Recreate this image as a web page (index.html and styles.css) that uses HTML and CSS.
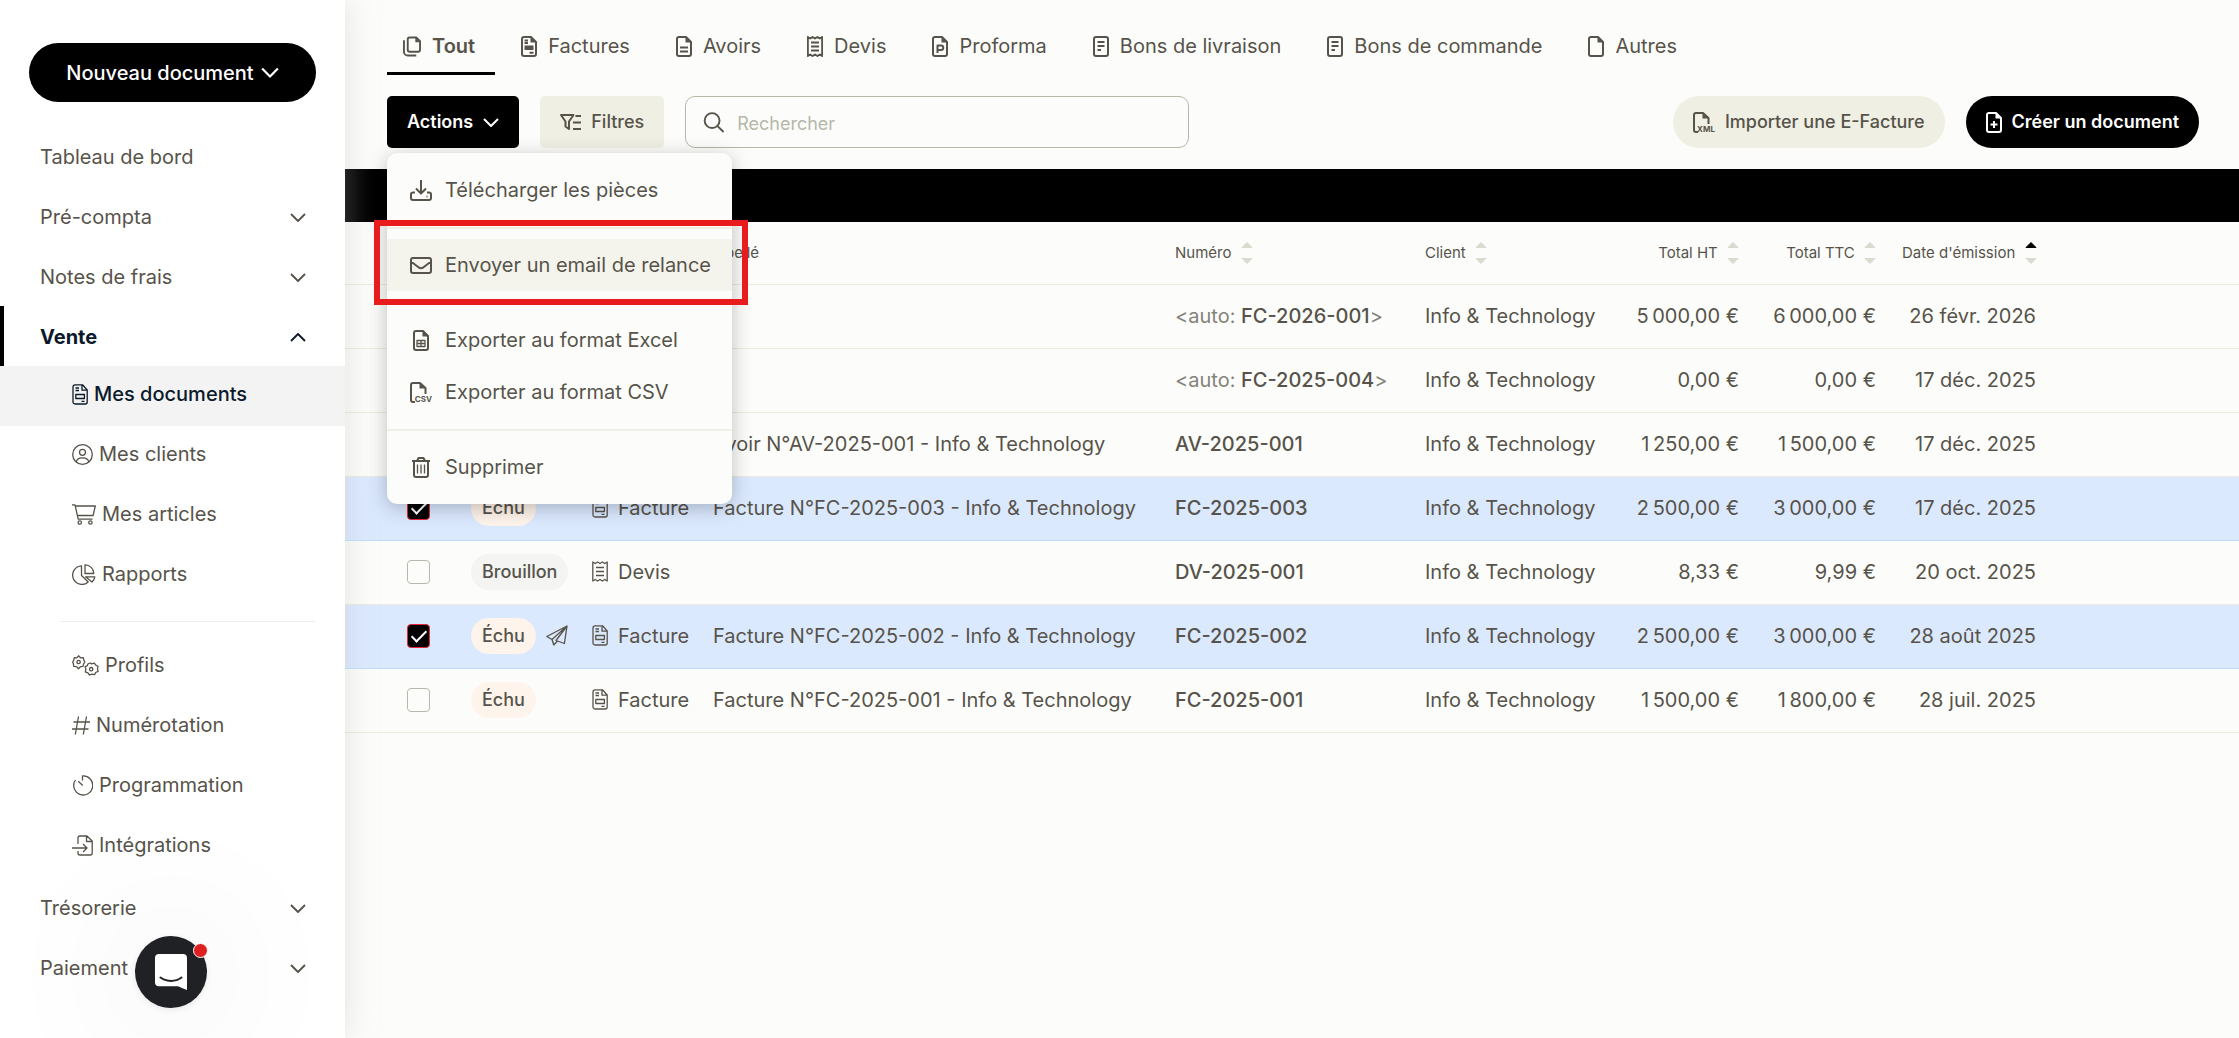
FILE: index.html
```html
<!DOCTYPE html>
<html lang="fr">
<head>
  <meta charset="UTF-8">
  <meta name="viewport" content="width=device-width, initial-scale=1.0">
  <title>Mes documents</title>
  <link rel="stylesheet" href="styles.css">
</head>
<body>
  <!-- Icon sprite -->
  <svg class="sprite" aria-hidden="true">
    <symbol id="i-chevron" viewBox="0 0 16 10"><path d="M1 1.5l7 7 7-7"/></symbol>
    <symbol id="i-invoice" viewBox="0 0 16 21"><path d="M3 .8h7.5L15.2 6v12a2 2 0 0 1-2 2H3a2 2 0 0 1-2-2V3A2 2 0 0 1 3 .8zM10 1v5.2h5M3.5 4h3.5M3.5 6.5h3.5M3.8 10.5h8.6v4H3.8zM9.500 17.3h3"/></symbol>
    <symbol id="i-invoice-bold" viewBox="0 0 16 21"><path d="M3 1h7l5 5v12a2 2 0 0 1-2 2H3a2 2 0 0 1-2-2V3a2 2 0 0 1 2-2zM3.5 4.500h3.5M3.5 7h3.5M8.500 16.7h4"/><path class="fill" d="M9.500 1v5.500H15zM3.5 9.500h9v4.500h-9z"/></symbol>
    <symbol id="i-user" viewBox="0 0 21 21"><circle cx="10.500" cy="10.500" r="9.800"/><circle cx="10.500" cy="8.300" r="3"/><path d="M4.300 18c.3-3 2.600-4.200 6.200-4.200s5.900 1.200 6.200 4.200"/></symbol>
    <symbol id="i-cart" viewBox="0 0 24 21"><path d="M0 .8h3l3.200 14.400h14.300M3.300 2h20l-2.200 9.500H5.500"/><circle cx="7.800" cy="18.500" r="1.700"/><circle cx="18.400" cy="18.500" r="1.700"/></symbol>
    <symbol id="i-pie" viewBox="0 0 24 21"><path d="M9.500 1.800A9.300 9.300 0 1 0 16.200 18l-6.700-6.500zM13 .8v8.700h8.800A8.800 8.800 0 0 0 13 .8zM13.500 12.800h9.300a8 8 0 0 1-2.800 5.200z"/></symbol>
    <symbol id="i-gears" viewBox="0 0 27 21"><path d="M6.500.8l2 2 2.800-.2 .6 2.700 1 1.700-1.300 1.900-.6 2.500-2.500.2-2 2.200-2-2.200-2.700-.2-.4-2.500L.7 7l1-1.700.6-2.700 2.500.2z"/><circle cx="6.600" cy="7" r="1.700"/><path d="M15.800 9l2.300-1 1.500.9 2.700-.8 1.500 2 2.200 1.200-.5 2.700.6 2.300-2.500 1.200-1 2.200-2.800-.6-2.300.9-1.600-2.200-2.600-1 .6-2.600-.8-2.600 2.400-.9z"/><circle cx="19.200" cy="14.200" r="1.700"/></symbol>
    <symbol id="i-hash" viewBox="0 0 18 21"><path d="M6.500 1.500l-3.200 18M14.500 1.500l-3.200 18M1.500 7H18M0 14h16.500"/></symbol>
    <symbol id="i-timer" viewBox="0 0 21 21"><path d="M3.500 5A9.500 9.500 0 1 0 10.500 1v4.500M6.200 6.200l4.600 4.200"/></symbol>
    <symbol id="i-import" viewBox="0 0 21 21"><path d="M6 9V3a2 2 0 0 1 2-2h7l5.200 5v12a2 2 0 0 1-2 2H8a2 2 0 0 1-2-2v-2M14.500 1v5.500h5.500M0 13h15M11 9l4 4-4 4"/></symbol>
    <symbol id="i-copy" viewBox="0 0 19 21"><path d="M7 1h7l4 4v9a2 2 0 0 1-2 2H7a2 2 0 0 1-2-2V3a2 2 0 0 1 2-2zM1 4v12a4 4 0 0 0 4 4h9"/><path class="fill" d="M13 1v5h5z"/></symbol>
    <symbol id="i-file" viewBox="0 0 16 21"><path d="M3 1h7l5 5v12a2 2 0 0 1-2 2H3a2 2 0 0 1-2-2V3a2 2 0 0 1 2-2z"/><path class="fill" d="M9.500 1v5.500H15z"/></symbol>
    <symbol id="i-file-lines" viewBox="0 0 16 21"><use href="#i-file"/><path d="M4 11.500h8M4 15.500h8"/></symbol>
    <symbol id="i-file-plus" viewBox="0 0 16 21"><use href="#i-file"/><path d="M8 9v7M4.500 12.500h7"/></symbol>
    <symbol id="i-file-p" viewBox="0 0 16 21"><use href="#i-file"/><path d="M5.500 17V9.500H9a2.200 2.200 0 0 1 0 4.500H5.500"/></symbol>
    <symbol id="i-file-grid" viewBox="0 0 16 21"><use href="#i-file"/><path class="thin" d="M4 10.500h8v6H4zM8 10.500v6M4 13.500h8"/></symbol>
    <symbol id="i-note" viewBox="0 0 16 21"><path d="M3 1h10a2 2 0 0 1 2 2v15a2 2 0 0 1-2 2H3a2 2 0 0 1-2-2V3a2 2 0 0 1 2-2zM4.500 6h7M4.500 10h7M4.500 14H8"/></symbol>
    <symbol id="i-receipt" viewBox="0 0 16 21"><path d="M.8 1l2.400 1.500L5.600 1 8 2.500 10.400 1l2.400 1.500L15.200 1v19l-2.400-1.500-2.400 1.500L8 18.500 5.600 20l-2.400-1.500L.8 20zM4 6.500h8M4 10.500h8M4 14.500h8"/></symbol>
    <symbol id="i-filter" viewBox="0 0 21 17"><path d="M1 1h12.500L9 7.500V15l-3.500-2.500v-5zM15.500 2H21M13 8.500h8M13 15h8"/></symbol>
    <symbol id="i-search" viewBox="0 0 22 22"><circle cx="9" cy="9" r="7.800"/><path d="M14.500 14.500l6.500 6.500"/></symbol>
    <symbol id="i-file-tag" viewBox="0 0 22 21"><path d="M5 20H3a2 2 0 0 1-2-2V3a2 2 0 0 1 2-2h7l5.500 5v6"/><path class="fill" d="M9.500 1v5.500h6z"/></symbol>
    <symbol id="i-download" viewBox="0 0 22 21"><path d="M11 0v13M6 8.500l5 5 5-5M5 12.500H3a2 2 0 0 0-2 2V18a2 2 0 0 0 2 2h16a2 2 0 0 0 2-2v-3.500a2 2 0 0 0-2-2h-2M16.500 16.500h1"/></symbol>
    <symbol id="i-mail" viewBox="0 0 22 17"><path d="M3 1h16a2 2 0 0 1 2 2v11a2 2 0 0 1-2 2H3a2 2 0 0 1-2-2V3a2 2 0 0 1 2-2zM1 4.500l7.500 5.700a4 4 0 0 0 5 0L21 4.500"/></symbol>
    <symbol id="i-trash" viewBox="0 0 18 21"><path d="M0 4h18M2 4v14a2 2 0 0 0 2 2h10a2 2 0 0 0 2-2V4M5 4l1.500-3h5L13 4"/><path class="thin" d="M5.500 7.500v9M9 7.500v9M12.500 7.500v9"/></symbol>
    <symbol id="i-plane" viewBox="0 0 22 21"><path d="M21 1L.8 11.500l5.200 3L21 1l-2.600 17.500-8.400-3L21 1M6 14.500l1.800 5.500L11.500 16M6 14.500l2 5.500"/></symbol>
    <symbol id="i-sort" viewBox="0 0 12 24"><path class="up" d="M6 1.500l5 5H1z"/><path class="down" d="M6 22.500l5-5H1z"/></symbol>
  </svg>

  <div class="app">
    <aside class="sidebar">
      <button class="new-doc" type="button">Nouveau document <svg class="icon w18 heavy"><use href="#i-chevron"/></svg></button>

      <nav>
        <a class="nav-item" href="#">Tableau de bord</a>
        <a class="nav-item" href="#">Pré-compta <svg class="icon w16"><use href="#i-chevron"/></svg></a>
        <a class="nav-item" href="#">Notes de frais <svg class="icon w16"><use href="#i-chevron"/></svg></a>
        <a class="nav-item open" href="#">Vente <svg class="icon w16"><use href="#i-chevron"/></svg></a>
        <a class="sub-item current" href="#"><svg class="icon w16"><use href="#i-invoice"/></svg>Mes documents</a>
        <a class="sub-item" href="#"><svg class="icon w21"><use href="#i-user"/></svg>Mes clients</a>
        <a class="sub-item" href="#"><svg class="icon w24"><use href="#i-cart"/></svg>Mes articles</a>
        <a class="sub-item" href="#"><svg class="icon w24"><use href="#i-pie"/></svg>Rapports</a>
        <hr class="nav-line">
        <a class="sub-item" href="#"><svg class="icon w27"><use href="#i-gears"/></svg>Profils</a>
        <a class="sub-item" href="#"><svg class="icon w18"><use href="#i-hash"/></svg>Numérotation</a>
        <a class="sub-item" href="#"><svg class="icon w21"><use href="#i-timer"/></svg>Programmation</a>
        <a class="sub-item" href="#"><svg class="icon w21"><use href="#i-import"/></svg>Intégrations</a>
        <a class="nav-item" href="#">Trésorerie <svg class="icon w16"><use href="#i-chevron"/></svg></a>
        <a class="nav-item" href="#">Paiement <svg class="icon w16"><use href="#i-chevron"/></svg></a>
      </nav>
    </aside>

    <main class="main">
      <nav class="tabs">
        <a class="tab active" href="#"><svg class="icon w18 heavy"><use href="#i-copy"/></svg>Tout</a>
        <a class="tab" href="#"><svg class="icon w16 heavy"><use href="#i-invoice-bold"/></svg>Factures</a>
        <a class="tab" href="#"><svg class="icon w16 heavy"><use href="#i-file-lines"/></svg>Avoirs</a>
        <a class="tab" href="#"><svg class="icon w16 heavy"><use href="#i-receipt"/></svg>Devis</a>
        <a class="tab" href="#"><svg class="icon w16 heavy"><use href="#i-file-p"/></svg>Proforma</a>
        <a class="tab" href="#"><svg class="icon w16 heavy"><use href="#i-note"/></svg>Bons de livraison</a>
        <a class="tab" href="#"><svg class="icon w16 heavy"><use href="#i-note"/></svg>Bons de commande</a>
        <a class="tab" href="#"><svg class="icon w16 heavy"><use href="#i-file"/></svg>Autres</a>
      </nav>

      <div class="toolbar">
        <div class="dropdown">
          <button class="btn dark" type="button">Actions <svg class="icon w16 heavy"><use href="#i-chevron"/></svg></button>
          <div class="menu">
            <button class="menu-item" type="button"><svg class="icon w22 heavy"><use href="#i-download"/></svg>Télécharger les pièces</button>
            <hr>
            <button class="menu-item hover" type="button"><svg class="icon w22 heavy"><use href="#i-mail"/></svg>Envoyer un email de relance<span class="highlight"></span></button>
            <hr>
            <button class="menu-item" type="button"><svg class="icon w22 heavy"><use href="#i-file-grid"/></svg>Exporter au format Excel</button>
            <button class="menu-item" type="button"><span class="file-tag"><svg class="icon w22 heavy"><use href="#i-file-tag"/></svg><small>CSV</small></span>Exporter au format CSV</button>
            <hr>
            <button class="menu-item" type="button"><svg class="icon w22 heavy"><use href="#i-trash"/></svg>Supprimer</button>
          </div>
        </div>
        <button class="btn pale" type="button"><svg class="icon w21 heavy"><use href="#i-filter"/></svg>Filtres</button>
        <label class="search">
          <svg class="icon w22 heavy"><use href="#i-search"/></svg>
          <input type="search" placeholder="Rechercher" aria-label="Rechercher">
        </label>
        <button class="btn pale round push" type="button"><span class="file-tag"><svg class="icon w22 heavy"><use href="#i-file-tag"/></svg><small>XML</small></span>Importer une E-Facture</button>
        <button class="btn dark round" type="button"><svg class="icon w16 heavy"><use href="#i-file-plus"/></svg>Créer un document</button>
      </div>

      <div class="selection-bar"></div>

      <table class="docs">
        <colgroup>
          <col class="c-check"><col class="c-status"><col class="c-type"><col class="c-label"><col class="c-number"><col class="c-client"><col class="c-ht"><col class="c-ttc"><col class="c-date"><col>
        </colgroup>
        <thead>
          <tr>
            <th></th>
            <th></th>
            <th></th>
            <th>Libellé</th>
            <th>Numéro <svg class="sort"><use href="#i-sort"/></svg></th>
            <th>Client <svg class="sort"><use href="#i-sort"/></svg></th>
            <th class="num">Total HT <svg class="sort"><use href="#i-sort"/></svg></th>
            <th class="num">Total TTC <svg class="sort"><use href="#i-sort"/></svg></th>
            <th class="num">Date d'émission <svg class="sort asc"><use href="#i-sort"/></svg></th>
            <th></th>
          </tr>
        </thead>
        <tbody>
          <tr>
            <td><input type="checkbox" aria-label="FC-2026-001"></td>
            <td></td>
            <td></td>
            <td></td>
            <td><span class="auto">&lt;auto: <b>FC-2026-001</b>&gt;</span></td>
            <td>Info &amp; Technology</td>
            <td class="num">5&#8239;000,00 €</td>
            <td class="num">6&#8239;000,00 €</td>
            <td class="num">26 févr. 2026</td>
            <td></td>
          </tr>
          <tr>
            <td><input type="checkbox" aria-label="FC-2025-004"></td>
            <td></td>
            <td></td>
            <td></td>
            <td><span class="auto">&lt;auto: <b>FC-2025-004</b>&gt;</span></td>
            <td>Info &amp; Technology</td>
            <td class="num">0,00 €</td>
            <td class="num">0,00 €</td>
            <td class="num">17 déc. 2025</td>
            <td></td>
          </tr>
          <tr>
            <td><input type="checkbox" aria-label="AV-2025-001"></td>
            <td></td>
            <td></td>
            <td>Avoir N°AV-2025-001 - Info &amp; Technology</td>
            <td><b>AV-2025-001</b></td>
            <td>Info &amp; Technology</td>
            <td class="num">1&#8239;250,00 €</td>
            <td class="num">1&#8239;500,00 €</td>
            <td class="num">17 déc. 2025</td>
            <td></td>
          </tr>
          <tr class="selected">
            <td><input type="checkbox" aria-label="FC-2025-003" checked></td>
            <td><span class="status"><span class="pill late">Échu</span></span></td>
            <td><span class="type"><svg class="icon w16"><use href="#i-invoice"/></svg>Facture</span></td>
            <td>Facture N°FC-2025-003 - Info &amp; Technology</td>
            <td><b>FC-2025-003</b></td>
            <td>Info &amp; Technology</td>
            <td class="num">2&#8239;500,00 €</td>
            <td class="num">3&#8239;000,00 €</td>
            <td class="num">17 déc. 2025</td>
            <td></td>
          </tr>
          <tr>
            <td><input type="checkbox" aria-label="DV-2025-001"></td>
            <td><span class="status"><span class="pill">Brouillon</span></span></td>
            <td><span class="type"><svg class="icon w16"><use href="#i-receipt"/></svg>Devis</span></td>
            <td></td>
            <td><b>DV-2025-001</b></td>
            <td>Info &amp; Technology</td>
            <td class="num">8,33 €</td>
            <td class="num">9,99 €</td>
            <td class="num">20 oct. 2025</td>
            <td></td>
          </tr>
          <tr class="selected">
            <td><input type="checkbox" aria-label="FC-2025-002" checked></td>
            <td><span class="status"><span class="pill late">Échu</span><svg class="icon w22"><use href="#i-plane"/></svg></span></td>
            <td><span class="type"><svg class="icon w16"><use href="#i-invoice"/></svg>Facture</span></td>
            <td>Facture N°FC-2025-002 - Info &amp; Technology</td>
            <td><b>FC-2025-002</b></td>
            <td>Info &amp; Technology</td>
            <td class="num">2&#8239;500,00 €</td>
            <td class="num">3&#8239;000,00 €</td>
            <td class="num">28 août 2025</td>
            <td></td>
          </tr>
          <tr>
            <td><input type="checkbox" aria-label="FC-2025-001"></td>
            <td><span class="status"><span class="pill late">Échu</span></span></td>
            <td><span class="type"><svg class="icon w16"><use href="#i-invoice"/></svg>Facture</span></td>
            <td>Facture N°FC-2025-001 - Info &amp; Technology</td>
            <td><b>FC-2025-001</b></td>
            <td>Info &amp; Technology</td>
            <td class="num">1&#8239;500,00 €</td>
            <td class="num">1&#8239;800,00 €</td>
            <td class="num">28 juil. 2025</td>
            <td></td>
          </tr>
        </tbody>
      </table>
    </main>
  </div>

  <button class="chat" type="button" aria-label="Chat">
    <svg viewBox="0 0 32 36"><path fill="#fff" d="M4 0h24a4 4 0 0 1 4 4v32c-3-1-6-2.500-9-3.700H4a4 4 0 0 1-4-4V4a4 4 0 0 1 4-4z"/><path d="M5.500 23.500c6 4.500 15 4.500 21 0" fill="none" stroke="#202124" stroke-width="2" stroke-linecap="round"/></svg>
    <span class="chat-dot"></span>
  </button>
</body>
</html>
```

FILE: styles.css
```css
* {
  box-sizing: border-box;
}

body {
  margin: 0;
  font-family: Inter, "Open Sans", sans-serif;
  font-size: 20px;
  line-height: 24px;
  color: #57534a;
  background: #fcfdfb;
}

a {
  color: inherit;
  text-decoration: none;
}

button {
  font: inherit;
  color: inherit;
  border: 0;
  background: none;
  cursor: pointer;
}

.app {
  display: flex;
  min-height: 100vh;
}

/* Icons */
.sprite {
  position: absolute;
  width: 0;
  height: 0;
}

.icon {
  flex: none;
  width: 16px;
  height: 21px;
  fill: none;
  stroke: currentColor;
  stroke-width: 1.3;
  stroke-linejoin: round;
}

.icon.heavy {
  stroke-width: 2;
}

.fill {
  fill: currentColor;
  stroke: none;
}

.thin {
  stroke-width: 1.3;
}

.w16 { width: 16px; }
.w18 { width: 18px; }
.w21 { width: 21px; }
.w22 { width: 22px; }
.w24 { width: 24px; }
.w27 { width: 27px; }

.file-tag {
  position: relative;
  display: flex;
}

.file-tag small {
  position: absolute;
  right: 0;
  bottom: 0;
  font-size: 8px;
  font-weight: 700;
  line-height: 7px;
}

/* Sidebar */
.sidebar {
  position: relative;
  z-index: 2;
  flex: none;
  width: 345px;
  padding-top: 43px;
  background: #fff;
  box-shadow: 0 0 30px rgba(190, 190, 190, 0.4);
}

.new-doc {
  display: flex;
  align-items: center;
  justify-content: center;
  gap: 7px;
  width: calc(100% - 58px);
  height: 59px;
  margin: 0 29px 24px;
  border-radius: 30px;
  font-weight: 500;
  color: #fff;
  background: #000;
}

.nav-item {
  display: flex;
  align-items: center;
  justify-content: space-between;
  height: 60px;
  padding: 2px 39px 0 40px;
}

.nav-item .icon {
  stroke-width: 1.8;
}

.nav-item.open {
  padding-left: 36px;
  border-left: 4px solid #000;
  font-weight: 700;
  color: #0b1a2b;
}

.nav-item.open .icon {
  transform: rotate(180deg);
}

.sub-item {
  display: flex;
  align-items: center;
  gap: 6px;
  height: 60px;
  padding: 0 39px 4px 72px;
}

.sub-item.current {
  font-weight: 500;
  color: #0b1a2b;
  background: #f3f3f3;
}

.nav-line {
  margin: 15px 30px 15px 60px;
  border: 0;
  border-top: 1px solid #ececec;
}

/* Tabs and toolbar */
.main {
  flex: 1;
  min-width: 0;
}

.tabs {
  display: flex;
  gap: 10px;
  padding: 20px 40px 0 42px;
}

.tab {
  display: flex;
  align-items: center;
  gap: 11px;
  height: 55px;
  padding: 0 20px 0 16px;
  border-bottom: 3px solid transparent;
}

.tab.active {
  border-color: #000;
  font-weight: 600;
}

.toolbar {
  display: flex;
  align-items: center;
  gap: 21px;
  padding: 21px 40px 21px 42px;
}

.dropdown {
  position: relative;
}

.btn {
  display: flex;
  align-items: center;
  gap: 10px;
  height: 52px;
  padding: 0 20px;
  border-radius: 5px;
  font-size: 18px;
  font-weight: 500;
  white-space: nowrap;
}

.dark {
  font-weight: 600;
  color: #fff;
  background: #000;
}

.pale {
  background: #efefe3;
}

.round {
  border-radius: 26px;
}

.push {
  margin-left: auto;
}

.search {
  display: flex;
  align-items: center;
  gap: 12px;
  flex: 0 1 504px;
  height: 52px;
  padding: 0 17px;
  border: 1px solid #b5b7a8;
  border-radius: 10px;
}

.search input {
  flex: 1;
  min-width: 0;
  padding: 4px 0 0;
  border: 0;
  outline: 0;
  font: inherit;
  font-size: 18px;
  background: none;
}

.search input::placeholder {
  color: #b5b7a8;
}

.menu {
  position: absolute;
  z-index: 3;
  top: 57px;
  left: 0;
  width: 345px;
  padding: 11px 0;
  border-radius: 10px;
  background: #fcfdfb;
  box-shadow: 0 4px 20px rgba(0, 0, 0, 0.25);
}

.menu hr {
  height: 2px;
  margin: 11px 0 10px;
  border: 0;
  background: #efefe3;
}

.menu-item {
  position: relative;
  display: flex;
  align-items: center;
  gap: 13px;
  width: 100%;
  height: 52px;
  padding: 0 0 0 23px;
  white-space: nowrap;
}

.menu-item.hover {
  background: #f4f4ec;
}

.highlight {
  position: absolute;
  inset: -19px -16px -14px -13px;
  border: 6px solid #e81c1c;
}

.selection-bar {
  height: 53px;
  background: #000;
}

/* Documents table */
.docs {
  width: 100%;
  table-layout: fixed;
  border-collapse: separate;
  border-spacing: 0;
}

.c-check { width: 113px; }
.c-status { width: 121px; }
.c-type { width: 121px; }
.c-label { width: 462px; }
.c-number { width: 250px; }
.c-client { width: 200px; }
.c-ht { width: 140px; }
.c-ttc { width: 137px; }
.c-date { width: 160px; }

.docs th,
.docs td {
  height: 64px;
  padding: 0 13px;
  border-bottom: 1px solid #ecebdf;
  text-align: left;
  white-space: nowrap;
}

.docs td {
  padding-bottom: 2px;
}

.docs th {
  height: 63px;
  font-size: 15px;
  font-weight: 400;
}

.docs td:first-child {
  padding-left: 62px;
}

.docs .num {
  text-align: right;
}

.docs b {
  font-weight: 500;
}

.selected td {
  border-color: #bddcfd;
  background: #dbe9ff;
}

.auto {
  color: #85827a;
}

.auto b {
  color: #57534a;
}

.sort {
  width: 12px;
  height: 24px;
  margin-left: 5px;
  vertical-align: middle;
}

.sort.asc {
  --up: #000;
}

.up,
.down {
  fill: #dadbce;
  stroke: #dadbce;
  stroke-linejoin: round;
}

.up {
  fill: var(--up, #dadbce);
  stroke: var(--up, #dadbce);
}

.docs input {
  display: block;
  appearance: none;
  width: 23px;
  height: 24px;
  margin: 0;
  border: 1px solid #b5b7a8;
  border-radius: 4px;
}

.docs input:checked {
  border-color: #e5292e;
  background: #000;
}

.docs input:checked::after {
  content: "";
  display: block;
  width: 6px;
  height: 13px;
  margin: 2px 7px;
  border: solid #fff;
  border-width: 0 2px 2px 0;
  transform: rotate(45deg);
}

.status,
.type {
  display: flex;
  align-items: center;
  gap: 10px;
}

.pill {
  padding: 0 11px;
  border-radius: 18px;
  font-size: 18px;
  font-weight: 500;
  line-height: 36px;
  background: #f4f4f3;
}

.pill.late {
  background: #fff4eb;
}

/* Chat launcher */
.chat {
  position: fixed;
  z-index: 4;
  bottom: 30px;
  left: 135px;
  display: flex;
  align-items: center;
  justify-content: center;
  width: 72px;
  height: 72px;
  padding: 0;
  border-radius: 50%;
  background: #202124;
  box-shadow: 0 2px 9px rgba(0, 0, 0, 0.08), 0 3px 150px rgba(0, 0, 0, 0.15);
}

.chat svg {
  width: 32px;
  height: 36px;
}

.chat-dot {
  position: absolute;
  top: 7px;
  right: -1px;
  width: 15px;
  height: 15px;
  border: 1px solid #fff;
  border-radius: 50%;
  background: #e02020;
}
```
